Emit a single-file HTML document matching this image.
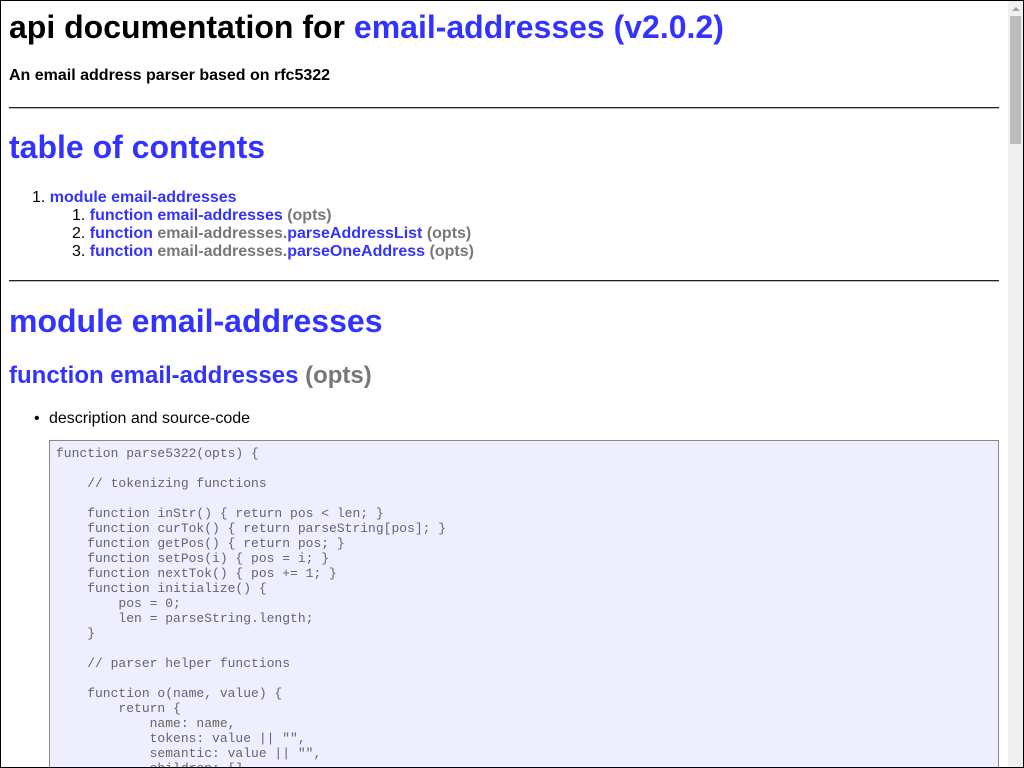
<!DOCTYPE html>
<html><head><style>
html,body{margin:0;padding:0;overflow:hidden;width:1024px;height:768px;}
body{position:relative;background:#fff;font-family:"Liberation Sans",sans-serif;}
.frame{position:absolute;left:0;top:0;width:1022px;height:766px;border:1px solid #000;}
.a{position:absolute;white-space:pre;margin:0;}
.b{color:#33f;}
.g{color:#777;}
.h1{font-size:32px;font-weight:bold;line-height:37px;}
.hr{position:absolute;left:9px;width:990px;height:1px;background:#222;border-bottom:1px solid #bbb;}
.li{font-size:16px;font-weight:bold;line-height:18px;}
pre{position:absolute;left:49px;top:440px;width:936px;height:320px;border:1px solid #888;background:#eef;padding:5px 6px;margin:0;font-family:"Liberation Mono",monospace;font-size:13px;line-height:15px;color:#666;overflow:hidden;}
.sb{position:absolute;left:1008px;top:1px;width:15px;height:766px;background:#f0f0f0;}
.th{position:absolute;left:1010px;top:16px;width:11px;height:128px;background:#bcbcbc;}
.ar{position:absolute;left:1012px;top:7px;width:0;height:0;border-left:4px solid transparent;border-right:4px solid transparent;border-bottom:4px solid #a0a0a0;}
</style></head><body>
<div class="a h1" style="left:9px;top:9px;">api documentation for <span class="b">email-addresses (v2.0.2)</span></div>
<div class="a" style="left:9px;top:67px;font-size:16px;font-weight:bold;line-height:18px;">An email address parser based on rfc5322</div>
<div class="hr" style="top:107px;"></div>
<div class="a h1 b" style="left:9px;top:129px;">table of contents</div>
<div class="a li" style="left:32px;top:189px;"><span style="font-weight:normal">1.</span> <span class="b">module email-addresses</span></div>
<div class="a li" style="left:72px;top:207px;"><span style="font-weight:normal">1.</span> <span class="b">function email-addresses</span> <span class="g">(opts)</span></div>
<div class="a li" style="left:72px;top:225px;"><span style="font-weight:normal">2.</span> <span class="b">function</span> <span class="g">email-addresses.</span><span class="b">parseAddressList</span> <span class="g">(opts)</span></div>
<div class="a li" style="left:72px;top:243px;"><span style="font-weight:normal">3.</span> <span class="b">function</span> <span class="g">email-addresses.</span><span class="b">parseOneAddress</span> <span class="g">(opts)</span></div>
<div class="hr" style="top:280px;"></div>
<div class="a h1 b" style="left:9px;top:303px;">module email-addresses</div>
<div class="a" style="left:9px;top:362px;font-size:24px;font-weight:bold;line-height:28px;"><span class="b">function email-addresses</span> <span class="g">(opts)</span></div>
<div class="a" style="left:34px;top:410px;font-size:16px;line-height:18px;">•</div>
<div class="a" style="left:49px;top:410px;font-size:16px;line-height:18px;">description and source-code</div>
<pre>function parse5322(opts) {

    // tokenizing functions

    function inStr() { return pos &lt; len; }
    function curTok() { return parseString[pos]; }
    function getPos() { return pos; }
    function setPos(i) { pos = i; }
    function nextTok() { pos += 1; }
    function initialize() {
        pos = 0;
        len = parseString.length;
    }

    // parser helper functions

    function o(name, value) {
        return {
            name: name,
            tokens: value || "",
            semantic: value || "",
            children: []
</pre>
<div class="sb"></div><div class="th"></div><div class="ar"></div>
<div class="frame"></div>
</body></html>
